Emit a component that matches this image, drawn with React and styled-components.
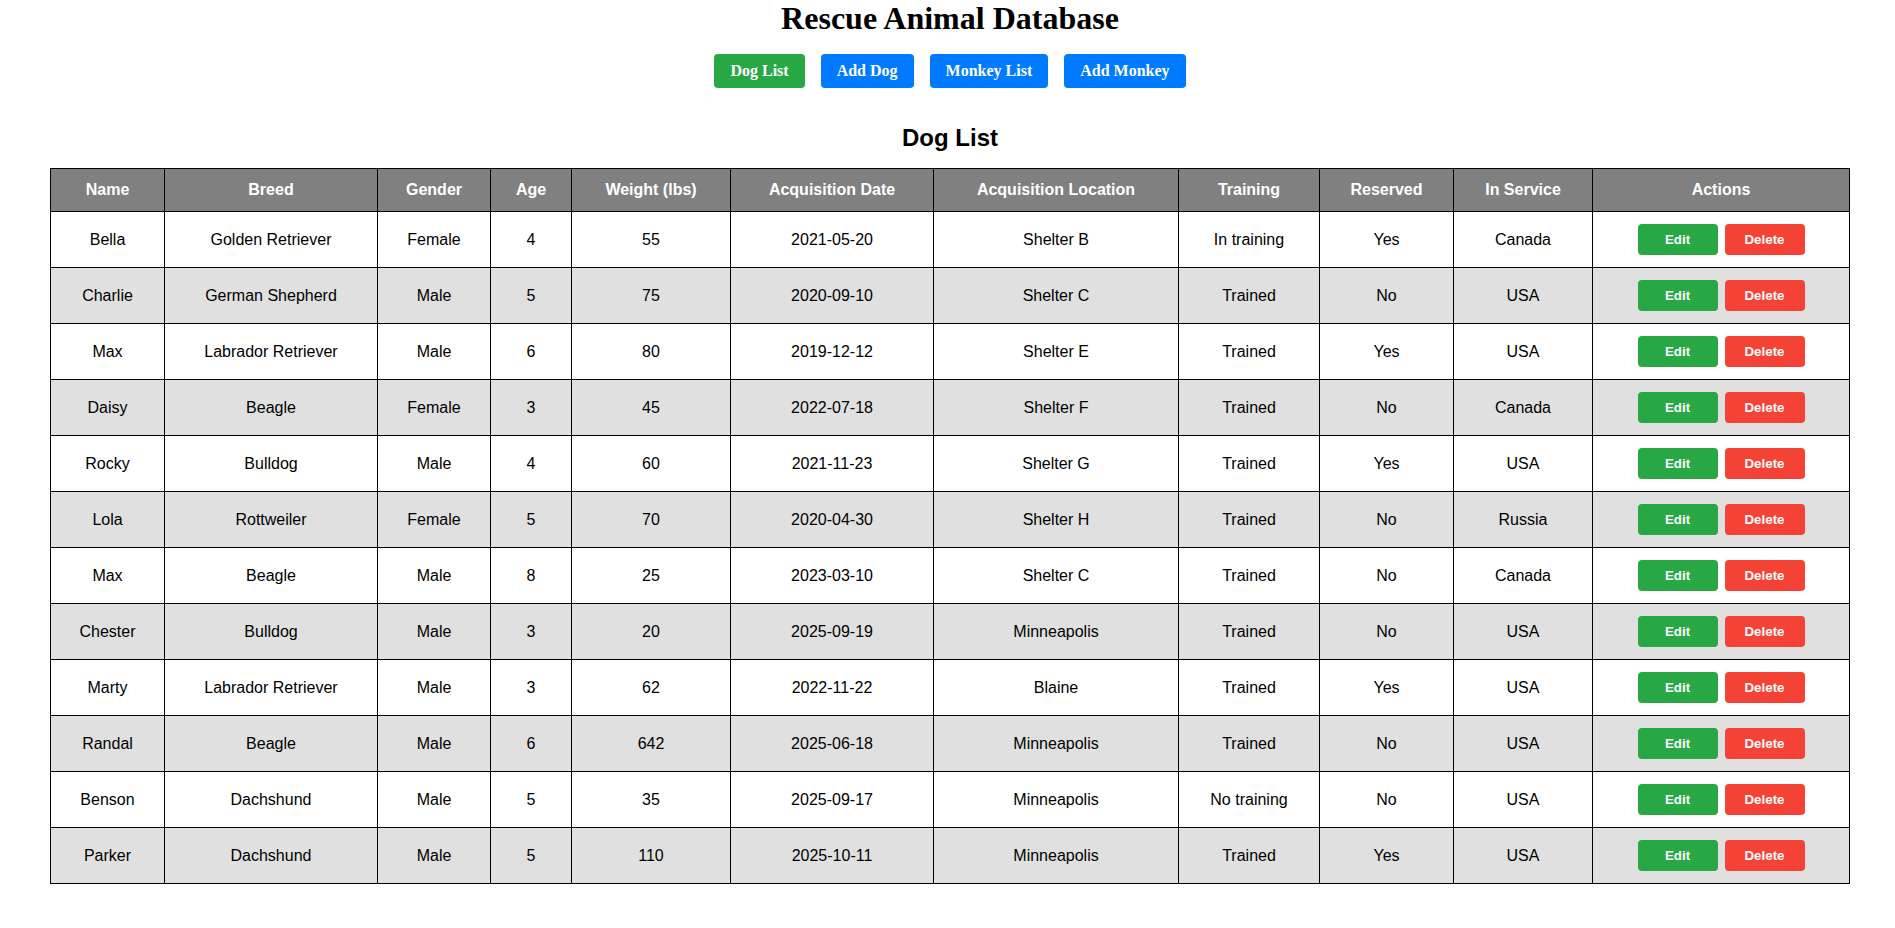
import React from 'react'
import styled, { createGlobalStyle } from 'styled-components'

const GlobalStyle = createGlobalStyle`
  body {
    margin: 0;
    background: #ffffff;
    font-family: "Liberation Serif", "Times New Roman", serif;
    color: #000;
  }
`

const dogs = [
  ['Bella', 'Golden Retriever', 'Female', 4, 55, '2021-05-20', 'Shelter B', 'In training', 'Yes', 'Canada'],
  ['Charlie', 'German Shepherd', 'Male', 5, 75, '2020-09-10', 'Shelter C', 'Trained', 'No', 'USA'],
  ['Max', 'Labrador Retriever', 'Male', 6, 80, '2019-12-12', 'Shelter E', 'Trained', 'Yes', 'USA'],
  ['Daisy', 'Beagle', 'Female', 3, 45, '2022-07-18', 'Shelter F', 'Trained', 'No', 'Canada'],
  ['Rocky', 'Bulldog', 'Male', 4, 60, '2021-11-23', 'Shelter G', 'Trained', 'Yes', 'USA'],
  ['Lola', 'Rottweiler', 'Female', 5, 70, '2020-04-30', 'Shelter H', 'Trained', 'No', 'Russia'],
  ['Max', 'Beagle', 'Male', 8, 25, '2023-03-10', 'Shelter C', 'Trained', 'No', 'Canada'],
  ['Chester', 'Bulldog', 'Male', 3, 20, '2025-09-19', 'Minneapolis', 'Trained', 'No', 'USA'],
  ['Marty', 'Labrador Retriever', 'Male', 3, 62, '2022-11-22', 'Blaine', 'Trained', 'Yes', 'USA'],
  ['Randal', 'Beagle', 'Male', 6, 642, '2025-06-18', 'Minneapolis', 'Trained', 'No', 'USA'],
  ['Benson', 'Dachshund', 'Male', 5, 35, '2025-09-17', 'Minneapolis', 'No training', 'No', 'USA'],
  ['Parker', 'Dachshund', 'Male', 5, 110, '2025-10-11', 'Minneapolis', 'Trained', 'Yes', 'USA']
]

const columns = [
  ['Name', 114],
  ['Breed', 213],
  ['Gender', 113],
  ['Age', 81],
  ['Weight (lbs)', 159],
  ['Acquisition Date', 203],
  ['Acquisition Location', 245],
  ['Training', 141],
  ['Reserved', 134],
  ['In Service', 139],
  ['Actions', 257]
]

const Page = styled.div`
  padding-left: 5px;
  padding-bottom: 40px;
  text-align: center;
`

const Title = styled.h1`
  margin: 0;
  font-size: 32px;
  font-weight: bold;
`

const Nav = styled.nav`
  display: flex;
  justify-content: center;
  gap: 16px;
  margin-top: 17px;
`

const NavButton = styled.button`
  font-family: inherit;
  font-size: 16px;
  font-weight: bold;
  color: #fff;
  background: ${props => props.active ? '#28a745' : '#007bff'};
  border: none;
  border-radius: 4px;
  padding: 8px 16px;
  cursor: pointer;
`

const Heading = styled.h2`
  margin: 36px 0 16px;
  font-family: "Liberation Sans", Arial, sans-serif;
  font-size: 24px;
  font-weight: bold;
`

const Table = styled.table`
  width: 1800px;
  margin: 0 auto;
  table-layout: fixed;
  border-collapse: collapse;
  font-family: "Liberation Sans", Arial, sans-serif;
  font-size: 16px;
  border: 1px solid #000;
`

const Th = styled.th`
  background: #808080;
  color: #fff;
  font-weight: bold;
  padding: 12px 8px;
  border: 1px solid #000;
`

const Row = styled.tr`
  background: ${props => props.striped ? '#e0e0e0' : '#ffffff'};
`

const Td = styled.td`
  height: 31px;
  padding: 12px 8px;
  border: 1px solid #000;
  text-align: center;
  vertical-align: middle;
`

const Actions = styled.div`
  display: flex;
  justify-content: center;
  gap: 7px;
`

const ActionButton = styled.button`
  width: 80px;
  height: 31px;
  font-family: "Liberation Sans", Arial, sans-serif;
  font-size: 13.33px;
  font-weight: bold;
  color: #fff;
  background: ${props => props.danger ? '#f44336' : '#28a745'};
  border: none;
  border-radius: 4px;
  cursor: pointer;
`

export default function App () {
  return (
    <Page>
      <GlobalStyle />
      <Title>Rescue Animal Database</Title>
      <Nav>
        <NavButton active>Dog List</NavButton>
        <NavButton>Add Dog</NavButton>
        <NavButton>Monkey List</NavButton>
        <NavButton>Add Monkey</NavButton>
      </Nav>
      <Heading>Dog List</Heading>
      <Table>
        <colgroup>
          {columns.map(([name, w]) => <col key={name} style={{ width: w }} />)}
        </colgroup>
        <thead>
          <tr>
            {columns.map(([name]) => <Th key={name}>{name}</Th>)}
          </tr>
        </thead>
        <tbody>
          {dogs.map((dog, i) => (
            <Row key={i} striped={i % 2 === 1}>
              {dog.map((v, j) => <Td key={j}>{v}</Td>)}
              <Td>
                <Actions>
                  <ActionButton>Edit</ActionButton>
                  <ActionButton danger>Delete</ActionButton>
                </Actions>
              </Td>
            </Row>
          ))}
        </tbody>
      </Table>
    </Page>
  )
}
